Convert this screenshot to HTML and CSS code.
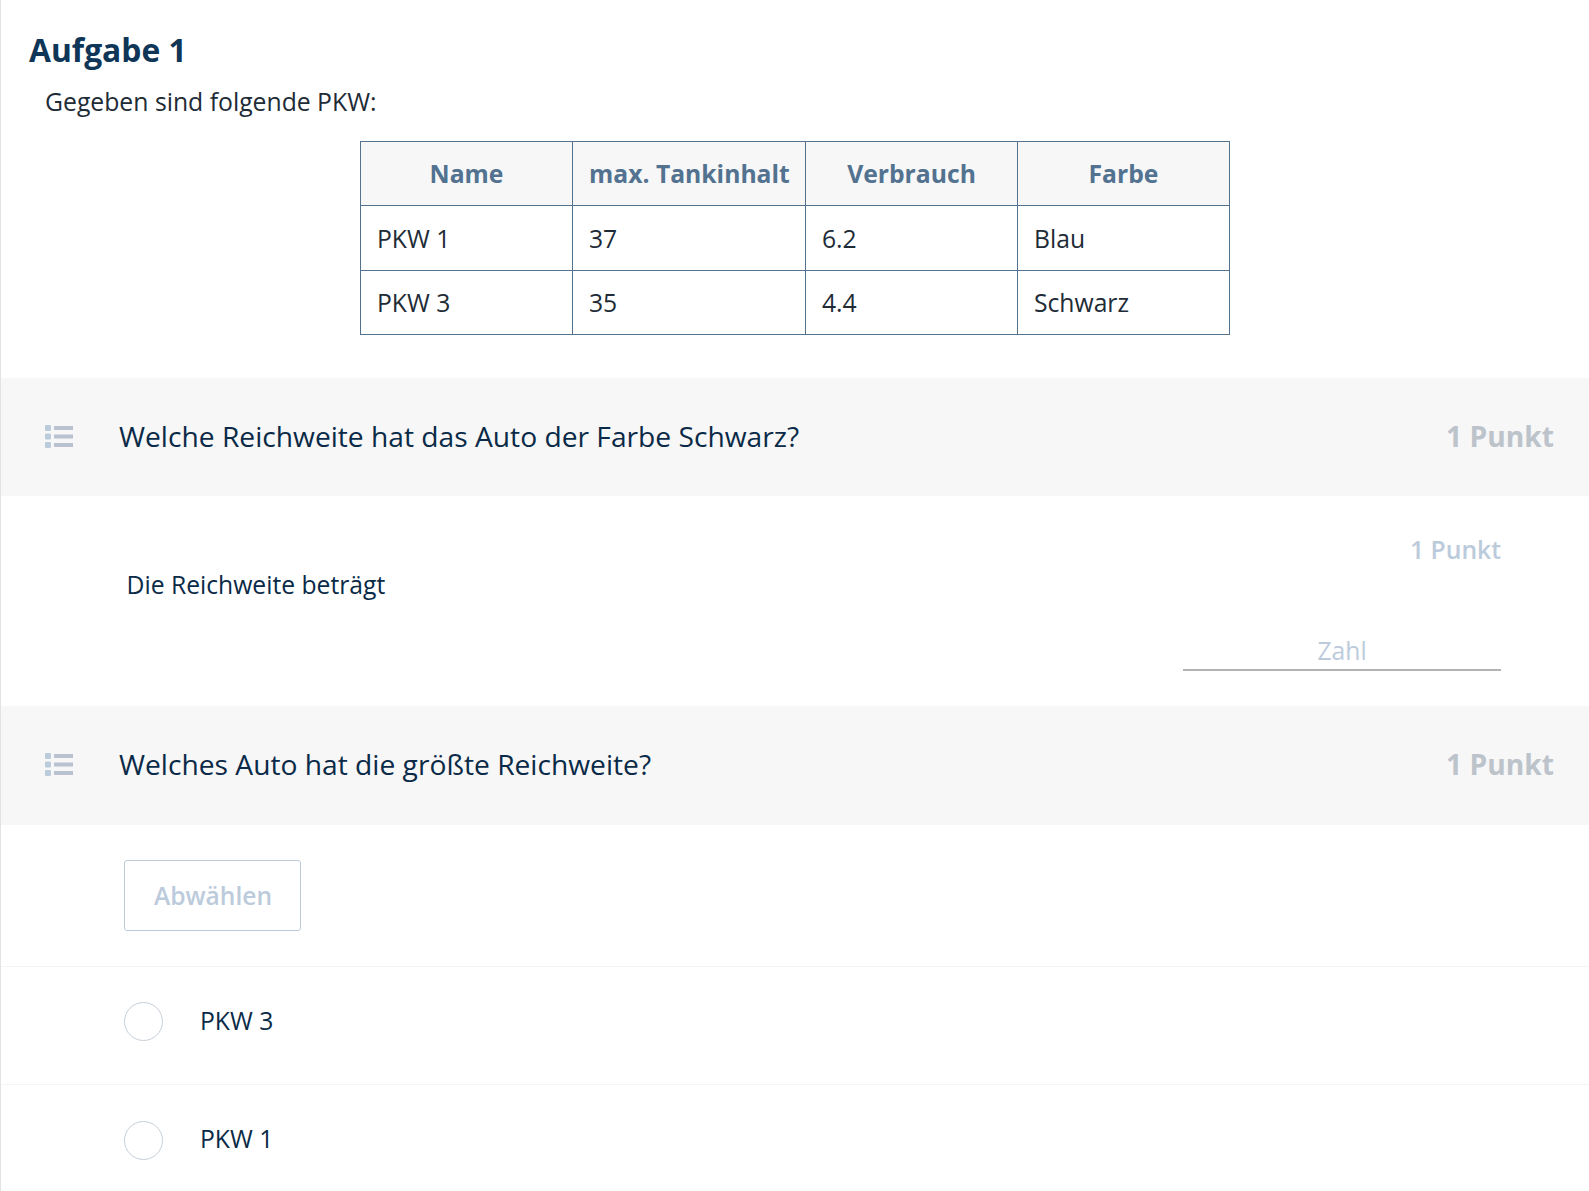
FILE: index.html
```html
<!DOCTYPE html>
<html lang="de">
<head>
<meta charset="utf-8">
<title>Aufgabe 1</title>
<link rel="stylesheet" href="styles.css">
</head>
<body>
<main class="page">
  <section class="intro">
    <h1 class="title">Aufgabe 1</h1>
    <p class="lead">Gegeben sind folgende PKW:</p>
    <table class="cars">
      <thead>
        <tr><th class="c1">Name</th><th class="c2">max. Tankinhalt</th><th class="c3">Verbrauch</th><th class="c4">Farbe</th></tr>
      </thead>
      <tbody>
        <tr><td>PKW 1</td><td>37</td><td>6.2</td><td>Blau</td></tr>
        <tr><td>PKW 3</td><td>35</td><td>4.4</td><td>Schwarz</td></tr>
      </tbody>
    </table>
  </section>

  <header class="question">
    <svg class="qicon" viewBox="0 0 28 23" aria-hidden="true"><rect class="dot" x="0" y="0" width="6" height="6" rx="1"/><rect class="dot" x="0" y="8.5" width="6" height="6" rx="1"/><rect class="dot" x="0" y="17" width="6" height="6" rx="1"/><rect class="bar" x="9" y="1" width="19" height="4"/><rect class="bar" x="9" y="9.5" width="19" height="4"/><rect class="bar" x="9" y="18" width="19" height="4"/></svg>
    <h2 class="qtext">Welche Reichweite hat das Auto der Farbe Schwarz?</h2>
    <span class="points">1 Punkt</span>
  </header>
  <section class="answer">
    <p class="answer-label">Die Reichweite beträgt</p>
    <div class="answer-side">
      <span class="points-small">1 Punkt</span>
      <div class="number-field">Zahl</div>
    </div>
  </section>

  <header class="question question-tall">
    <svg class="qicon" viewBox="0 0 28 23" aria-hidden="true"><rect class="dot" x="0" y="0" width="6" height="6" rx="1"/><rect class="dot" x="0" y="8.5" width="6" height="6" rx="1"/><rect class="dot" x="0" y="17" width="6" height="6" rx="1"/><rect class="bar" x="9" y="1" width="19" height="4"/><rect class="bar" x="9" y="9.5" width="19" height="4"/><rect class="bar" x="9" y="18" width="19" height="4"/></svg>
    <h2 class="qtext">Welches Auto hat die größte Reichweite?</h2>
    <span class="points">1 Punkt</span>
  </header>
  <div class="clear-row"><button class="clear" type="button">Abwählen</button></div>
  <label class="option"><span class="radio"></span><span class="option-text">PKW 3</span></label>
  <label class="option"><span class="radio"></span><span class="option-text">PKW 1</span></label>
</main>
</body>
</html>
```
FILE: styles.css
```css
* { box-sizing: border-box; }
html, body { margin: 0; padding: 0; background: #fff; }
body { font-family: "Open Sans", "Noto Sans", sans-serif; color: #212b36; height: 1191px; overflow: hidden; }
.page { border-left: 1px solid #e3e3e3; height: 1191px; }
.intro { height: 378px; padding: 28px 0 0 28px; }
.title { margin: 0; font-size: 31.8px; line-height: 43px; font-weight: 700; color: #0f3557; }
.lead { margin: 14px 0 0 16px; font-size: 24.75px; line-height: 34px; color: #212b36; font-weight: 400; }
.cars { margin: 22px 0 0 331px; border-collapse: collapse; table-layout: fixed; width: 870px; font-size: 24.7px; }
.cars th, .cars td { border: 1px solid #527290; height: 64.4px; padding: 0 16px; text-align: left; font-weight: 400; color: #212b36; white-space: nowrap; }
.cars th { text-align: center; font-weight: 700; background: #f7f7f7; color: #527290; }
.c1 { width: 212px; } .c2 { width: 233px; } .c3 { width: 212px; } .c4 { width: 212px; }
.question { display: flex; align-items: center; height: 118px; background: #f7f7f7; padding: 0 35px 2px 44px; }
.question-tall { height: 119px; padding-bottom: 3px; }
.qicon { width: 28px; height: 23px; flex: none; margin-right: 46px; }
.dot { fill: #bccbdb; }
.bar { fill: #b9c3cf; }
.qtext { margin: 0; flex: 1; font-size: 28.2px; font-weight: 400; line-height: 38px; color: #0a2a47; }
.points { font-size: 28.2px; font-weight: 700; color: #bcc3cb; }
.answer { display: flex; justify-content: space-between; height: 210px; padding: 0 88px 0 125.5px; }
.answer-label { margin: 72px 0 0; font-size: 24.7px; line-height: 34px; color: #0a2a47; }
.answer-side { width: 318px; display: flex; flex-direction: column; align-items: flex-end; padding-top: 37px; }
.points-small { font-size: 24.7px; line-height: 34px; font-weight: 600; color: #bccbdb; }
.number-field { width: 318px; margin-top: 67px; text-align: center; font-size: 24.7px; line-height: 34px; height: 37px; color: #bccbdb; border-bottom: 2px solid #b3b3b3; }
.clear-row { height: 142px; padding: 35px 0 0 123px; border-bottom: 1px solid #f4f4f4; }
.clear { width: 177px; height: 71px; border: 1px solid #bccbdb; border-radius: 3px; background: #fff; font: 600 24.6px "Open Sans", sans-serif; color: #bccbdb; padding: 0 0 0 1px; }
.option { display: flex; align-items: center; height: 118.4px; padding: 0 0 8px 123px; border-bottom: 1px solid #f4f4f4; }
.radio { width: 39px; height: 39px; border: 1.5px solid #c6d0da; border-radius: 50%; flex: none; margin-right: 37px; }
.option-text { font-size: 24.7px; color: #0a2a47; margin-bottom: 3px; }
```
